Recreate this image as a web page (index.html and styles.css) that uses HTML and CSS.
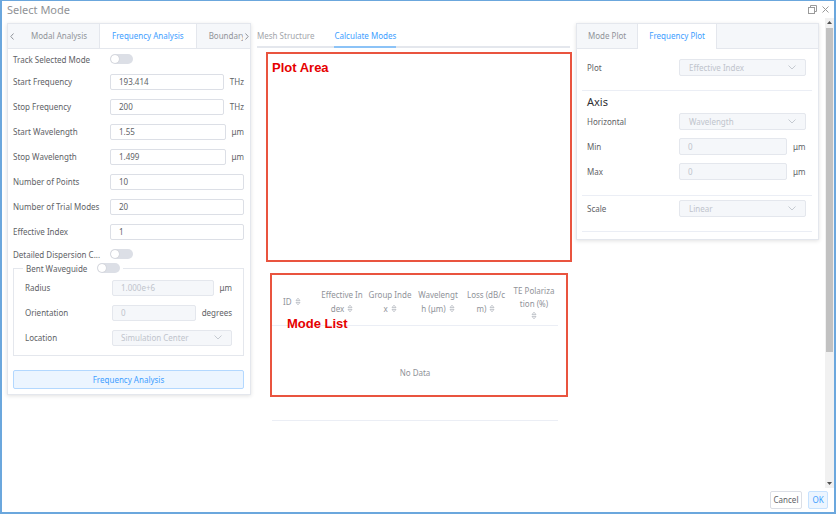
FILE: index.html
```html
<!DOCTYPE html>
<html>
<head>
<meta charset="utf-8">
<title>Select Mode</title>
<link rel="stylesheet" href="styles.css">
</head>
<body>
<div class="window">
  <header class="titlebar">
    <span class="title">Select Mode</span>
    <span class="win-ctrls">
      <svg width="9" height="9" viewBox="0 0 9 9"><path d="M2.5 2.5V0.5H8.5V6.5H6.5" fill="none" stroke="#9a9a9a"/><rect x="0.5" y="2.5" width="6" height="6" fill="none" stroke="#9a9a9a"/></svg>
      <svg width="7" height="7" viewBox="0 0 7 7"><path d="M0.5 0.5L6.5 6.5M6.5 0.5L0.5 6.5" stroke="#9a9a9a"/></svg>
    </span>
  </header>

  <div class="body">
    <div class="content">

      <section class="card card-left">
        <div class="tabs">
          <span class="tab-arrow left"><svg width="4" height="7" viewBox="0 0 4 7"><path d="M3.5 0.5L0.8 3.5L3.5 6.5" fill="none" stroke="#909399"/></svg></span>
          <div class="tab-list">
            <span class="tab">Modal Analysis</span>
            <span class="tab active">Frequency Analysis</span>
            <span class="tab tab-last">Boundary</span>
          </div>
          <span class="tab-arrow right"><svg width="4" height="7" viewBox="0 0 4 7"><path d="M0.5 0.5L3.2 3.5L0.5 6.5" fill="none" stroke="#909399"/></svg></span>
        </div>
        <div class="form">
          <div class="row row-short"><span class="lbl">Track Selected Mode</span><span class="switch"><i></i></span></div>
          <div class="row"><span class="lbl">Start Frequency</span><span class="input">193.414</span><span class="unit">THz</span></div>
          <div class="row"><span class="lbl">Stop Frequency</span><span class="input">200</span><span class="unit">THz</span></div>
          <div class="row"><span class="lbl">Start Wavelength</span><span class="input">1.55</span><span class="unit">μm</span></div>
          <div class="row"><span class="lbl">Stop Wavelength</span><span class="input">1.499</span><span class="unit">μm</span></div>
          <div class="row"><span class="lbl">Number of Points</span><span class="input">10</span></div>
          <div class="row"><span class="lbl">Number of Trial Modes</span><span class="input">20</span></div>
          <div class="row"><span class="lbl">Effective Index</span><span class="input">1</span></div>
          <div class="row row-short"><span class="lbl">Detailed Dispersion C...</span><span class="switch"><i></i></span></div>
          <fieldset class="group">
            <legend><span>Bent Waveguide</span><span class="switch"><i></i></span></legend>
            <div class="row"><span class="lbl lbl-in">Radius</span><span class="input disabled">1.000e+6</span><span class="unit">μm</span></div>
            <div class="row"><span class="lbl lbl-in">Orientation</span><span class="input disabled">0</span><span class="unit">degrees</span></div>
            <div class="row"><span class="lbl lbl-in">Location</span><span class="input select disabled">Simulation Center<svg width="8" height="5" viewBox="0 0 8 5"><path d="M0.5 0.5L4 4L7.5 0.5" fill="none" stroke="#c0c4cc" stroke-width="0.9"/></svg></span></div>
          </fieldset>
          <div class="btn-primary-plain">Frequency Analysis</div>
        </div>
      </section>

      <section class="middle">
        <div class="mtabs">
          <span class="mtab">Mesh Structure</span>
          <span class="mtab active">Calculate Modes</span>
        </div>
        <div class="plot-box"><span class="anno">Plot Area</span></div>
        <div class="mode-box">
          <div class="mtable">
            <div class="thead">
              <div class="th th-id"><span>ID <svg class="sort" width="6" height="9" viewBox="0 0 6 9"><path d="M1 3.6L3 1.2L5 3.6Z M1 5.4L3 7.8L5 5.4Z" fill="none" stroke="#b4b8bf" stroke-width="0.8"/></svg></span></div>
              <div class="th"><span>Effective In</span><span>dex <svg class="sort" width="6" height="9" viewBox="0 0 6 9"><path d="M1 3.6L3 1.2L5 3.6Z M1 5.4L3 7.8L5 5.4Z" fill="none" stroke="#b4b8bf" stroke-width="0.8"/></svg></span></div>
              <div class="th"><span>Group Inde</span><span>x <svg class="sort" width="6" height="9" viewBox="0 0 6 9"><path d="M1 3.6L3 1.2L5 3.6Z M1 5.4L3 7.8L5 5.4Z" fill="none" stroke="#b4b8bf" stroke-width="0.8"/></svg></span></div>
              <div class="th"><span>Wavelengt</span><span>h (μm) <svg class="sort" width="6" height="9" viewBox="0 0 6 9"><path d="M1 3.6L3 1.2L5 3.6Z M1 5.4L3 7.8L5 5.4Z" fill="none" stroke="#b4b8bf" stroke-width="0.8"/></svg></span></div>
              <div class="th"><span>Loss (dB/c</span><span>m) <svg class="sort" width="6" height="9" viewBox="0 0 6 9"><path d="M1 3.6L3 1.2L5 3.6Z M1 5.4L3 7.8L5 5.4Z" fill="none" stroke="#b4b8bf" stroke-width="0.8"/></svg></span></div>
              <div class="th"><span>TE Polariza</span><span>tion (%)</span><span><svg class="sort" width="6" height="9" viewBox="0 0 6 9"><path d="M1 3.6L3 1.2L5 3.6Z M1 5.4L3 7.8L5 5.4Z" fill="none" stroke="#b4b8bf" stroke-width="0.8"/></svg></span></div>
            </div>
            <div class="nodata">No Data</div>
          </div>
          <span class="anno anno-mode">Mode List</span>
        </div>
      </section>

      <section class="card card-right">
        <div class="tabs">
          <span class="tab">Mode Plot</span>
          <span class="tab active">Frequency Plot</span>
        </div>
        <div class="rbody">
          <div class="rrow"><span class="rlbl">Plot</span><span class="input select disabled">Effective Index<svg width="8" height="5" viewBox="0 0 8 5"><path d="M0.5 0.5L4 4L7.5 0.5" fill="none" stroke="#c0c4cc" stroke-width="0.9"/></svg></span></div>
          <div class="divider d1"></div>
          <div class="axis">Axis</div>
          <div class="rrow"><span class="rlbl">Horizontal</span><span class="input select disabled">Wavelength<svg width="8" height="5" viewBox="0 0 8 5"><path d="M0.5 0.5L4 4L7.5 0.5" fill="none" stroke="#c0c4cc" stroke-width="0.9"/></svg></span></div>
          <div class="rrow"><span class="rlbl">Min</span><span class="input disabled">0</span><span class="unit">μm</span></div>
          <div class="rrow"><span class="rlbl">Max</span><span class="input disabled">0</span><span class="unit">μm</span></div>
          <div class="divider d2"></div>
          <div class="rrow"><span class="rlbl">Scale</span><span class="input select disabled">Linear<svg width="8" height="5" viewBox="0 0 8 5"><path d="M0.5 0.5L4 4L7.5 0.5" fill="none" stroke="#c0c4cc" stroke-width="0.9"/></svg></span></div>
          <div class="divider d3"></div>
        </div>
      </section>

    </div>
    <div class="scrollbar">
      <span class="sb-arrow"><svg width="5" height="3" viewBox="0 0 5 3"><path d="M0 3L2.5 0L5 3Z" fill="#505050"/></svg></span>
      <span class="sb-thumb"></span>
      <span class="sb-space"></span>
      <span class="sb-arrow"><svg width="5" height="3" viewBox="0 0 5 3"><path d="M0 0L2.5 3L5 0Z" fill="#505050"/></svg></span>
    </div>
  </div>

  <footer class="footer">
    <span class="btn btn-cancel">Cancel</span>
    <span class="btn btn-ok">OK</span>
  </footer>
</div>
</body>
</html>
```

FILE: styles.css
```css
* { box-sizing: border-box; margin: 0; padding: 0; }
html, body { width: 836px; height: 516px; overflow: hidden; background: #fff; }
body { font-family: "Noto Sans", "Open Sans", sans-serif; font-size: 8px; color: #606266; }

.window {
  width: 836px; height: 514px;
  border: 2px solid #6ba7dd; border-top-width: 1px;
  display: flex; flex-direction: column; background: #fff;
}
.titlebar { height: 17px; flex: none; display: flex; align-items: center; justify-content: space-between; padding: 0 5px; }
.title { font-size: 11px; color: #8f9296; }
.win-ctrls { display: flex; align-items: center; gap: 5px; }
.win-ctrls svg { display: block; }

.body { height: 470px; flex: none; display: flex; }
.content { flex: 1; display: flex; align-items: flex-start; padding: 5px 0 0 5px; }

/* cards */
.card { background: #fff; border: 1px solid #e4e7ed; box-shadow: 0 1px 4px rgba(0,0,0,0.12); flex: none; }
.card-left { width: 244px; margin-right: 6px; }
.card-right { width: 243px; }
.tabs { height: 25px; display: flex; background: #f5f7fa; border-bottom: 1px solid #e4e7ed; }
.tab-arrow { flex: none; display: flex; align-items: center; justify-content: center; }
.tab-arrow.left { width: 11px; justify-content: flex-start; padding-left: 2px; }
.tab-arrow.right { width: 7px; }
.tab-list { flex: 1; display: flex; overflow: hidden; white-space: nowrap; }
.tab { flex: none; height: 25px; line-height: 24px; padding: 0 12px; color: #909399; font-size: 8px; }
.tab-last { padding-right: 0; }
.card-right .tab { padding: 0 11px; }
.tab.active { background: #fff; color: #409eff; border-left: 1px solid #e4e7ed; border-right: 1px solid #e4e7ed; margin-bottom: -1px; }

/* left form */
.form { padding: 0 6px 5px 5px; }
.row { height: 25px; display: flex; align-items: center; }
.row-short { height: 20px; }
.lbl { width: 97px; flex: none; padding-right: 6px; white-space: nowrap; color: #606266; }
.lbl-in { width: 87px; }
.input {
  flex: 1; height: 16px; border: 1px solid #dcdfe6; border-radius: 2px;
  padding-left: 8px; line-height: 14px; color: #606266; background: #fff;
  font-size: 8px; white-space: nowrap;
}
.input.disabled { background: #f5f7fa; border-color: #e4e7ed; color: #c0c4cc; }
.input.select { display: flex; align-items: center; justify-content: space-between; padding-right: 9px; }
.input.select svg { display: block; }
.unit { flex: none; min-width: 18px; padding-left: 6px; color: #606266; white-space: nowrap; }

.switch { position: relative; width: 23px; height: 10px; border-radius: 5px; background: #dcdfe6; flex: none; }
.switch i { position: absolute; left: 1px; top: 1px; width: 8px; height: 8px; border-radius: 50%; background: #fff; box-shadow: 0 0 1px rgba(0,0,0,0.25); }

.group { border: 1px solid #e4e7ed; margin-top: -2px; padding: 1px 11px 5px 11px; min-width: 0; }
.group legend { display: flex; align-items: center; gap: 10px; padding: 0 3px; margin-left: -2px; height: 12px; color: #606266; }

.btn-primary-plain {
  margin-top: 14px; height: 19px; line-height: 17px; text-align: center;
  background: #ecf5ff; border: 1px solid #b3d8ff; border-radius: 2px; color: #409eff; font-size: 8px;
}

/* middle */
.middle { width: 315px; flex: none; margin-right: 4px; }
.mtabs { height: 25px; margin-right: 2px; padding-top: 2px; border-bottom: 2px solid #e4e7ed; display: flex; }
.mtab { height: 23px; line-height: 21px; color: #a3a6ab; font-size: 8px; margin-bottom: -2px; border-bottom: 2px solid transparent; }
.mtab + .mtab { margin-left: 20px; }
.mtab.active { color: #409eff; border-bottom-color: #8cc3f7; }

.plot-box { margin: 4px 0 0 9px; height: 210px; border: 2px solid #e9543f; padding: 7px 4px; }
.anno { font-family: "Liberation Sans", Arial, sans-serif; font-weight: bold; font-size: 13px; color: #e60000; line-height: 14px; }

.mode-box { position: relative; margin: 11px 0 0 13px; width: 298px; height: 124px; border: 2px solid #e9543f; }
.mtable { margin-top: 3px; width: 286px; }
.thead { height: 48px; border-bottom: 1px solid #ebeef5; display: flex; }
.th { flex: none; width: 48px; display: flex; flex-direction: column; align-items: center; justify-content: center; color: #909399; font-size: 8px; line-height: 13.5px; white-space: nowrap; }
.th-id { width: 46px; align-items: flex-start; padding-left: 11px; }
.th span { display: flex; align-items: center; gap: 3px; }
.sort { display: block; }
.nodata { height: 95px; line-height: 94px; border-bottom: 1px solid #ebeef5; text-align: center; color: #909399; font-size: 8px; }
.anno-mode { position: absolute; left: 15px; top: 42px; }

/* right */
.rbody { padding: 6px 6px 7px 5px; }
.rrow { height: 25px; display: flex; align-items: center; padding: 0 6px 0 5px; }
.rlbl { width: 92px; flex: none; color: #606266; }
.rrow .input { height: 17px; line-height: 15px; }
.rrow .input.select { padding-left: 9px; }
.rrow .unit { min-width: 19px; }
.divider { height: 1px; background: #ebeef5; }
.d1 { margin-top: 10px; }
.d2 { margin-top: 11px; }
.d3 { margin-top: 10px; }
.axis { height: 18px; padding: 4px 0 0 5px; line-height: 14px; font-size: 11px; color: #303133; }

/* scrollbar */
.scrollbar { width: 9px; flex: none; background: #f1f1f1; display: flex; flex-direction: column; align-items: center; }
.sb-arrow { height: 9px; width: 9px; display: flex; align-items: center; justify-content: center; flex: none; }
.sb-thumb { margin-top: 1px; width: 7px; height: 324px; background: #c1c1c1; flex: none; }
.sb-space { flex: 1; }

/* footer */
.footer { height: 24px; flex: none; display: flex; justify-content: flex-end; gap: 6px; padding: 3px 6px 0 0; }
.btn { height: 18px; line-height: 16px; font-size: 8px; text-align: center; border-radius: 2px; }
.btn-cancel { width: 32px; border: 1px solid #dcdfe6; color: #606266; background: #fff; }
.btn-ok { width: 20px; border: 1px solid #c6e2ff; color: #409eff; background: #ecf5ff; }
```
